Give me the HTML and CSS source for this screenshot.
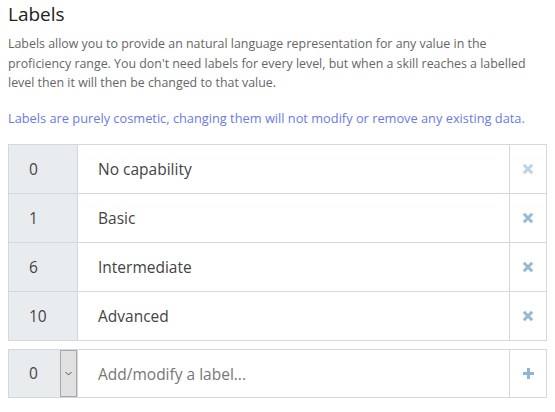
FILE: index.html
```html
<!DOCTYPE html>
<html lang="en">
<head>
    <meta charset="UTF-8">
    <title>Labels</title>
    <link rel="stylesheet" href="styles.css">
</head>
<body>

<div class="panel">
    <h2>Labels</h2>
    <p class="help">Labels allow you to provide an natural language representation for any value in the proficiency range. You don't need labels for every level, but when a skill reaches a labelled level then it will then be changed to that value.</p>
    <p class="note">Labels are purely cosmetic, changing them will not modify or remove any existing data.</p>

    <table class="label-table">
        <tr>
            <td class="level">0</td>
            <td class="name">No capability</td>
            <td class="remove disabled">
                <svg width="12" height="12" viewBox="0 0 12 12"><path d="M1.8 1.8L10.2 10.2M10.2 1.8L1.8 10.2" /></svg>
            </td>
        </tr>
        <tr>
            <td class="level">1</td>
            <td class="name">Basic</td>
            <td class="remove">
                <svg width="12" height="12" viewBox="0 0 12 12"><path d="M1.8 1.8L10.2 10.2M10.2 1.8L1.8 10.2" /></svg>
            </td>
        </tr>
        <tr>
            <td class="level">6</td>
            <td class="name">Intermediate</td>
            <td class="remove">
                <svg width="12" height="12" viewBox="0 0 12 12"><path d="M1.8 1.8L10.2 10.2M10.2 1.8L1.8 10.2" /></svg>
            </td>
        </tr>
        <tr>
            <td class="level">10</td>
            <td class="name">Advanced</td>
            <td class="remove">
                <svg width="12" height="12" viewBox="0 0 12 12"><path d="M1.8 1.8L10.2 10.2M10.2 1.8L1.8 10.2" /></svg>
            </td>
        </tr>
    </table>

    <div class="add-row">
        <div class="level-select">
            <span class="value">0</span>
            <span class="caret">
                <svg width="7" height="5" viewBox="0 0 7 5"><path d="M0.5 1L3.5 4L6.5 1" /></svg>
            </span>
        </div>
        <input type="text" class="label-input" placeholder="Add/modify a label...">
        <div class="add-button">
            <svg width="13" height="13" viewBox="0 0 13 13"><path d="M6.5 1V12M1 6.5H12" /></svg>
        </div>
    </div>
</div>

</body>
</html>
```

FILE: styles.css
```css
body {
    margin: 0;
    padding: 0 8px;
    font-family: 'Open Sans', 'Noto Sans', sans-serif;
    background-color: #fff;
    color: #333;
}

.panel h2 {
    margin: 2px 0 8px;
    font-size: 19px;
    font-weight: normal;
    line-height: 24px;
    color: #222;
}

.help {
    margin: 0 0 16px;
    font-size: 12.4px;
    line-height: 19.5px;
    color: #666;
}

.note {
    margin: 0 0 16px;
    font-size: 12.8px;
    line-height: 19.5px;
    color: #6a7be6;
}

.label-table {
    width: 100%;
    border-collapse: collapse;
}

.label-table td {
    height: 48px;
    padding: 0;
    border: 1px solid #d2d8de;
    font-size: 15.5px;
    color: #444;
    vertical-align: middle;
}

.label-table .level {
    width: 48px;
    padding-left: 20px;
    background-color: #e9ecef;
}

.label-table .name {
    padding-left: 20px;
}

.label-table .remove {
    width: 36px;
    text-align: center;
}

.remove svg {
    display: block;
    margin: 0 auto;
}

.remove path {
    stroke: #95b9d8;
    stroke-width: 3;
    fill: none;
}

.remove.disabled path {
    stroke: #bcd3e5;
}

.add-row {
    display: flex;
    height: 49px;
    margin-top: 8px;
    border: 1px solid #d2d8de;
    box-sizing: border-box;
}

.level-select {
    display: flex;
    width: 68px;
    background-color: #e9ecef;
    border-right: 1px solid #d2d8de;
}

.level-select .value {
    flex: 1;
    padding-left: 20px;
    font-size: 15.5px;
    line-height: 47px;
    color: #444;
}

.level-select .caret {
    display: flex;
    align-items: center;
    justify-content: center;
    width: 15px;
    background-color: #e1e1e1;
    border: 1px solid #a8a8a8;
}

.caret path {
    stroke: #555;
    stroke-width: 1;
    fill: none;
}

.label-input {
    flex: 1;
    padding: 0 0 0 20px;
    border: none;
    outline: none;
    font-family: inherit;
    font-size: 15.5px;
    color: #444;
}

.label-input::placeholder {
    color: #777;
}

.add-button {
    display: flex;
    align-items: center;
    justify-content: center;
    width: 36px;
    border-left: 1px solid #d2d8de;
}

.add-button path {
    stroke: #8fb5d6;
    stroke-width: 3;
    fill: none;
}
```
